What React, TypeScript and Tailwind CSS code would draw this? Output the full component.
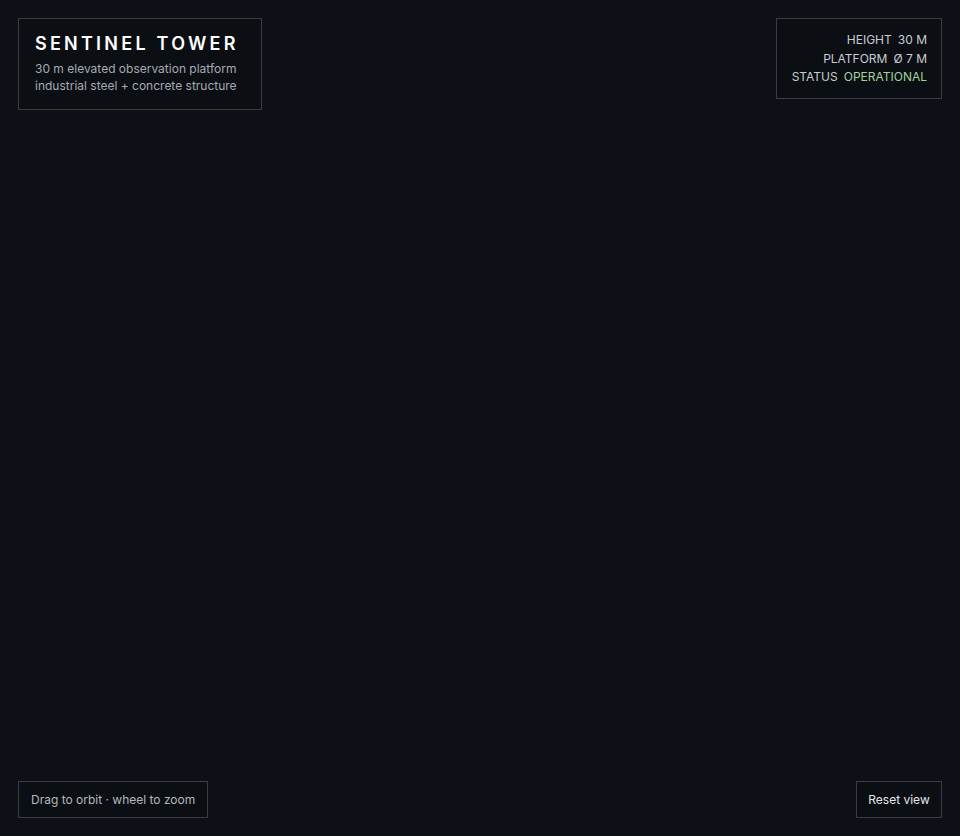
export default function App() {
  return (
    <div
      className="flex h-[836px] w-[960px] flex-col justify-between overflow-hidden bg-[#0d1016] p-[18px] text-[#c9ccd2]"
      style={{ fontFamily: "Inter, 'Noto Sans', sans-serif" }}
    >
      {/* top row */}
      <div className="flex items-start justify-between">
        <div className="w-[244px] border border-[#3a3d44] bg-[#0b0e13] px-4 pb-[15px] pt-[14px]">
          <h1 className="text-[18px] font-semibold leading-[22px] tracking-[0.18em] text-white">
            SENTINEL TOWER
          </h1>
          <p className="mt-[5px] text-[12px] leading-[17px] text-[#a6aab2]">
            30 m elevated observation platform
            <br />
            industrial steel + concrete structure
          </p>
        </div>

        <div className="flex flex-col items-end whitespace-nowrap border border-[#3a3d44] bg-[#0b0e13] pb-[11px] pl-[15px] pr-[14px] pt-[12px] text-[12px] leading-[18.5px] text-[#c9ccd2]">
          <div className="flex gap-[6px]">
            <span>HEIGHT</span>
            <span>30 M</span>
          </div>
          <div className="flex gap-[6px]">
            <span>PLATFORM</span>
            <span>Ø 7 M</span>
          </div>
          <div className="flex gap-[6px]">
            <span>STATUS</span>
            <span className="text-[#9fd49a]">OPERATIONAL</span>
          </div>
        </div>
      </div>

      {/* bottom row */}
      <div className="flex items-end justify-between">
        <div className="flex h-[37px] items-center border border-[#3a3d44] bg-[#0b0e13] px-3 text-[12px] text-[#b4b8bf]">
          Drag to orbit · wheel to zoom
        </div>
        <button className="flex h-[37px] w-[86px] items-center justify-center border border-[#3a3d44] bg-[#0b0e13] text-[12px] text-[#e4e6ea]">
          Reset view
        </button>
      </div>
    </div>
  );
}
